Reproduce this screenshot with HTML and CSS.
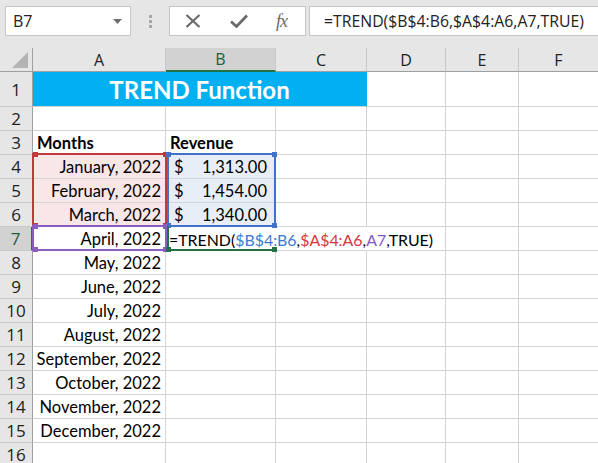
FILE: index.html
```html
<!DOCTYPE html>
<html>
<head>
<meta charset="utf-8">
<link rel="stylesheet" href="styles.css">
</head>
<body>
<div class="topbar">
  <div class="namebox">
    <span class="nb-text">B7</span>
    <svg class="nb-arrow" width="9" height="5" viewBox="0 0 9 5"><path d="M0 0H9L4.5 5Z" fill="#6e6e6e"/></svg>
  </div>
  <div class="grip"><i></i><i></i><i></i></div>
  <div class="fxbox">
    <svg class="ico-x" width="16" height="14" viewBox="0 0 16 14"><path d="M1.5 1L14.5 13M14.5 1L1.5 13" stroke="#6b6b6b" stroke-width="2.2" fill="none"/></svg>
    <svg class="ico-check" width="18" height="14" viewBox="0 0 18 14"><path d="M1 7.5L6.5 12.5L17 1.5" stroke="#6b6b6b" stroke-width="2.8" fill="none"/></svg>
    <span class="fx">fx</span>
  </div>
  <div class="formula">=TREND($B$4:B6,$A$4:A6,A7,TRUE)</div>
</div>

<div class="sheet">
  <div class="corner"><svg width="16" height="16" viewBox="0 0 16 16"><path d="M16 0V16H0Z" fill="#b4b4b4"/></svg></div>
  <div class="ch">A</div><div class="ch sel">B</div><div class="ch">C</div><div class="ch">D</div><div class="ch">E</div><div class="ch">F</div>

  <div class="rh">1</div><div class="c title">TREND Function</div><div class="c"></div><div class="c"></div><div class="c"></div>
  <div class="rh">2</div><div class="c"></div><div class="c"></div><div class="c"></div><div class="c"></div><div class="c"></div><div class="c"></div>
  <div class="rh">3</div><div class="c bold">Months</div><div class="c bold">Revenue</div><div class="c"></div><div class="c"></div><div class="c"></div><div class="c"></div>
  <div class="rh">4</div><div class="c r pink">January, 2022</div><div class="c money blue"><span>$</span><span>1,313.00</span></div><div class="c"></div><div class="c"></div><div class="c"></div><div class="c"></div>
  <div class="rh">5</div><div class="c r pink">February, 2022</div><div class="c money blue"><span>$</span><span>1,454.00</span></div><div class="c"></div><div class="c"></div><div class="c"></div><div class="c"></div>
  <div class="rh">6</div><div class="c r pink">March, 2022</div><div class="c money blue"><span>$</span><span>1,340.00</span></div><div class="c"></div><div class="c"></div><div class="c"></div><div class="c"></div>
  <div class="rh sel">7</div><div class="c r">April, 2022</div><div class="c edit"><span class="edit-text">=TREND(<span class="rb">$B$4:B6</span>,<span class="rr">$A$4:A6</span>,<span class="rp">A7</span>,TRUE)</span></div><div class="c nr"></div><div class="c"></div><div class="c"></div><div class="c"></div>
  <div class="rh">8</div><div class="c r">May, 2022</div><div class="c"></div><div class="c"></div><div class="c"></div><div class="c"></div><div class="c"></div>
  <div class="rh">9</div><div class="c r">June, 2022</div><div class="c"></div><div class="c"></div><div class="c"></div><div class="c"></div><div class="c"></div>
  <div class="rh">10</div><div class="c r">July, 2022</div><div class="c"></div><div class="c"></div><div class="c"></div><div class="c"></div><div class="c"></div>
  <div class="rh">11</div><div class="c r">August, 2022</div><div class="c"></div><div class="c"></div><div class="c"></div><div class="c"></div><div class="c"></div>
  <div class="rh">12</div><div class="c r">September, 2022</div><div class="c"></div><div class="c"></div><div class="c"></div><div class="c"></div><div class="c"></div>
  <div class="rh">13</div><div class="c r">October, 2022</div><div class="c"></div><div class="c"></div><div class="c"></div><div class="c"></div><div class="c"></div>
  <div class="rh">14</div><div class="c r">November, 2022</div><div class="c"></div><div class="c"></div><div class="c"></div><div class="c"></div><div class="c"></div>
  <div class="rh">15</div><div class="c r">December, 2022</div><div class="c"></div><div class="c"></div><div class="c"></div><div class="c"></div><div class="c"></div>
  <div class="rh">16</div><div class="c"></div><div class="c"></div><div class="c"></div><div class="c"></div><div class="c"></div><div class="c"></div>

  <div class="range red"><i class="h tl"></i><i class="h tr"></i><i class="h bl"></i><i class="h br"></i></div>
  <div class="range blu"><i class="h tl"></i><i class="h tr"></i><i class="h bl"></i><i class="h br"></i></div>
  <div class="range pur"><i class="h tl"></i><i class="h tr"></i><i class="h bl"></i><i class="h br"></i></div>
  <div class="range grn"><i class="h bl"></i><i class="h br"></i></div>
</div>
</body>
</html>
```

FILE: styles.css
```css
* { box-sizing: border-box; }
html, body { margin: 0; padding: 0; }
body {
  width: 598px;
  height: 463px;
  overflow: hidden;
  background: #fff;
  font-family: Lato, "Liberation Sans", sans-serif;
  color: #000;
}

.topbar {
  height: 48px;
  background: #e6e6e6;
  display: flex;
  align-items: flex-start;
  padding: 6px 0 0 5px;
  font-family: "Open Sans", "Noto Sans", sans-serif;
}
.namebox {
  width: 126px;
  height: 30px;
  background: #fff;
  border: 1px solid #c6c6c6;
  display: flex;
  align-items: center;
  justify-content: space-between;
  padding: 0 8px 0 7px;
  font-size: 16px;
  color: #222;
}
.nb-arrow { margin-top: 1px; }
.grip {
  width: 38px;
  height: 30px;
  display: flex;
  flex-direction: column;
  align-items: center;
  justify-content: center;
  gap: 2px;
}
.grip i { display: block; width: 3px; height: 3px; background: #a6a6a6; }
.fxbox {
  width: 137px;
  height: 30px;
  background: #fff;
  border: 1px solid #c6c6c6;
  display: flex;
  align-items: center;
  padding-left: 15px;
}
.ico-x { margin-right: 29px; }
.ico-check { margin-right: 28px; }
.fx {
  font-family: "Liberation Serif", "DejaVu Serif", serif;
  font-style: italic;
  font-size: 18px;
  color: #6b6b6b;
  letter-spacing: -1px;
}
.formula {
  margin-left: 3px;
  flex: 1;
  height: 30px;
  background: #fff;
  border: 1px solid #c6c6c6;
  border-right: none;
  display: flex;
  align-items: center;
  padding-left: 14px;
  font-size: 15.8px;
  color: #222;
  white-space: nowrap;
}

.sheet {
  position: relative;
  display: grid;
  grid-template-columns: 33px 133px 110px 91px 79px 73px 80px;
  grid-template-rows: 24px 35px repeat(15, 24px);
  font-size: 16.5px;
}
.corner {
  background: #e6e6e6;
  border-right: 1px solid #9f9f9f;
  border-bottom: 1px solid #9f9f9f;
  display: flex;
  align-items: flex-end;
  justify-content: flex-end;
  padding: 0 4px 3px 0;
}
.ch {
  background: #e6e6e6;
  border-right: 1px solid #c8c8c8;
  border-bottom: 1px solid #9f9f9f;
  display: flex;
  align-items: center;
  justify-content: center;
  font-size: 16px;
  color: #222;
  font-family: "Open Sans", "Noto Sans", sans-serif;
}
.ch.sel {
  background: #d2d2d2;
  color: #1d5e3c;
  border-bottom: 2px solid #217346;
}
.rh {
  background: #e6e6e6;
  border-right: 1px solid #9f9f9f;
  border-bottom: 1px solid #c8c8c8;
  display: flex;
  align-items: center;
  justify-content: center;
  font-size: 17px;
  color: #222;
  font-family: "Open Sans", "Noto Sans", sans-serif;
}
.rh.sel {
  background: #d2d2d2;
  color: #1d5e3c;
  border-right: 2px solid #217346;
}
.c {
  border-right: 1px solid #d4d4d4;
  border-bottom: 1px solid #d4d4d4;
  display: flex;
  align-items: center;
  padding: 1px 4px 0;
  white-space: nowrap;
  min-width: 0;
}
.c.r { justify-content: flex-end; }
.c.bold { font-weight: 700; }
.c.nr { border-right-color: transparent; }
.title {
  grid-column: span 3;
  background: #00b0f0;
  color: #fff;
  font-weight: 700;
  font-size: 24px;
  justify-content: center;
  border-right: 1px solid #00b0f0;
  border-bottom: 1px solid #d4d4d4;
}
.pink { background: #f9e6e7; }
.blue { background: #e8eef8; }
.money { justify-content: space-between; padding: 1px 8px 0 8px; }
.edit {
  overflow: visible;
  padding-left: 3px;
  font-size: 15.9px;
  border-right-color: transparent;
}
.edit-text { position: relative; z-index: 10; }
.rb { color: #3d7ad6; }
.rr { color: #d6363d; }
.rp { color: #8458c8; }

.range { position: absolute; border: 2px solid; pointer-events: none; }
.red { left: 32px; top: 105px; width: 135px; height: 74px; border-color: #c3383d; z-index: 2; }
.blu { left: 167px; top: 105px; width: 109px; height: 74px; border-color: #3f72c8; z-index: 3; }
.pur { left: 32px; top: 177px; width: 135px; height: 26px; border-color: #8a5ec0; z-index: 4; }
.grn {
  left: 167px; top: 177px; width: 109px; height: 26px;
  border-color: transparent transparent #217346 #217346;
  z-index: 5;
}
.range .h { position: absolute; width: 5px; height: 5px; display: block; }
.red .h { background: #c3383d; }
.blu .h { background: #3f72c8; }
.pur .h { background: #8a5ec0; }
.grn .h { background: #217346; }
.h.tl { left: -3px; top: -3px; }
.h.tr { right: -3px; top: -3px; }
.h.bl { left: -3px; bottom: -3px; }
.h.br { right: -3px; bottom: -3px; }
.red .h.tl, .pur .h.tl, .pur .h.bl, .red .h.bl { left: -1px; }
```
